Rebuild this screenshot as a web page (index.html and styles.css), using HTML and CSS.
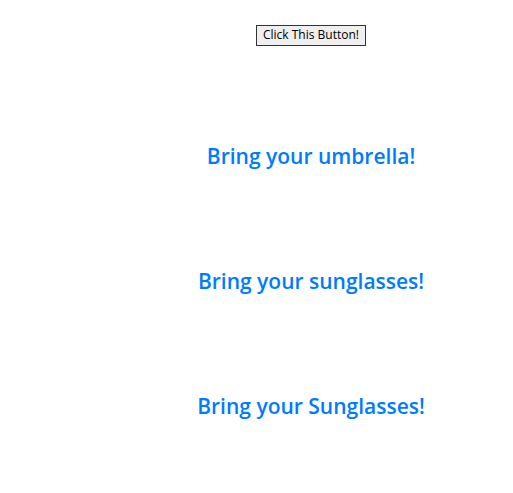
FILE: index.html
```html
<!DOCTYPE html>
<html>
<head>
<meta charset="utf-8">
<link rel="stylesheet" href="styles.css">
</head>
<body>
<div class="page">
  <button class="btn">Click This Button!</button>
  <h5 class="msg">Bring your umbrella!</h5>
  <h5 class="msg">Bring your sunglasses!</h5>
  <h5 class="msg">Bring your Sunglasses!</h5>
</div>
</body>
</html>
```

FILE: styles.css
```css
html, body {
  margin: 0;
  padding: 0;
  background: #ffffff;
}
.page {
  display: flex;
  flex-direction: column;
  align-items: center;
  padding-left: 109px;
  padding-top: 25px;
}
.btn {
  font-family: "Open Sans", "Noto Sans", sans-serif;
  font-size: 12px;
  line-height: 16px;
  color: #000;
  background: #efefef;
  border: 1px solid #333;
  border-radius: 0;
  padding: 1px 6px 2px;
  margin: 0;
}
.msg {
  font-family: "Open Sans", "Noto Sans", sans-serif;
  font-weight: 600;
  font-size: 21px;
  line-height: 25px;
  color: #007bff;
  margin: 0;
  margin-top: 100px;
}
.btn + .msg {
  margin-top: 98px;
}
```
